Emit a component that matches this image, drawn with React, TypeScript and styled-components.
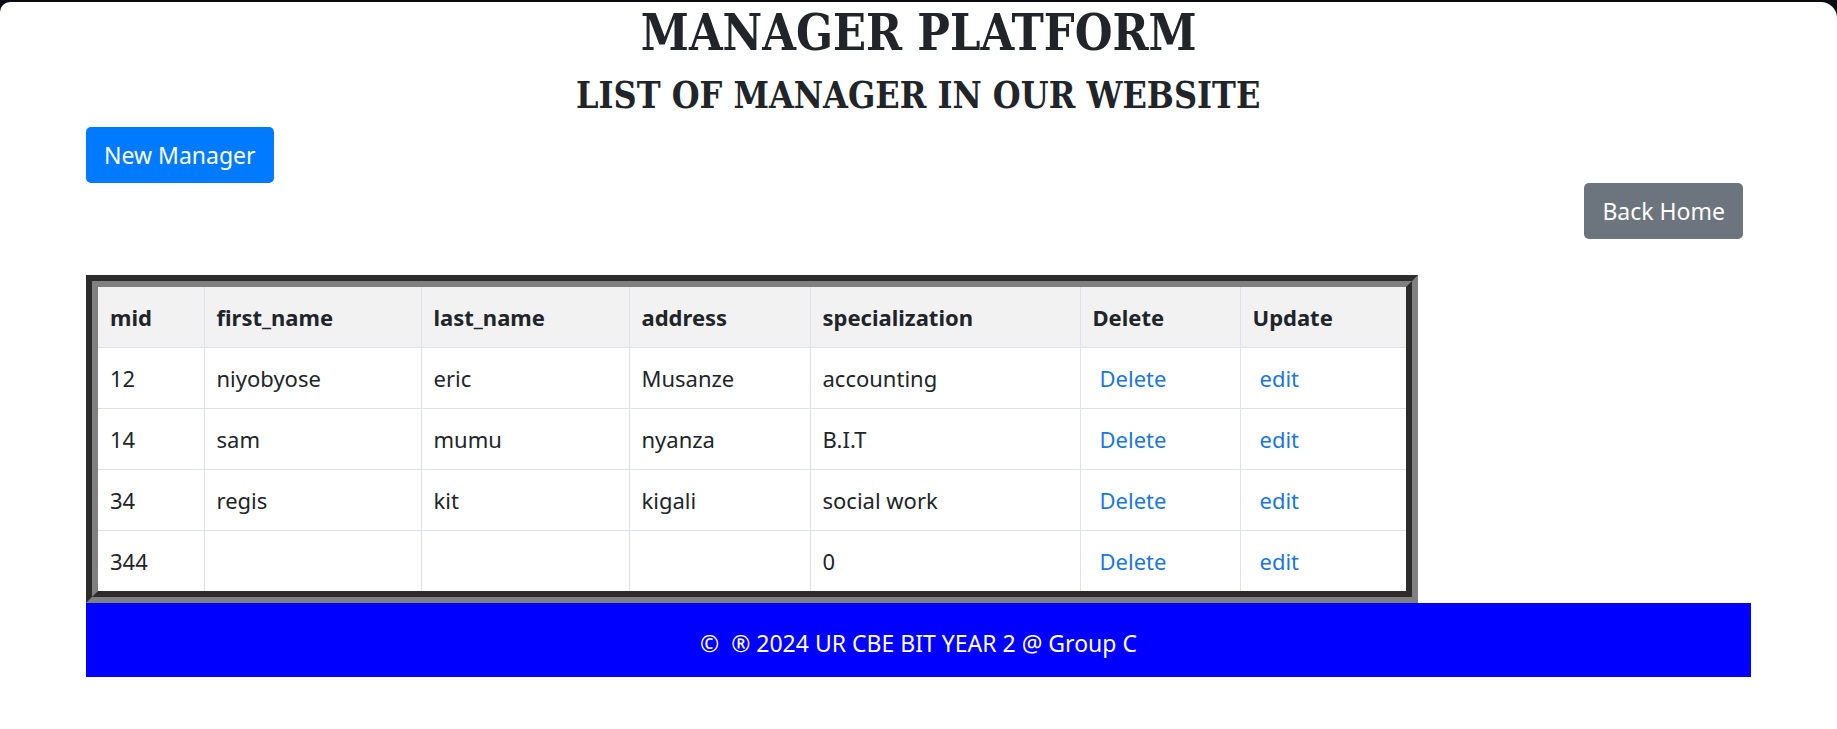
import React from "react";
import styled, { createGlobalStyle } from "styled-components";

type Manager = {
  mid: number;
  firstName: string;
  lastName: string;
  address: string;
  specialization: string;
};

const managers: Manager[] = [
  { mid: 12, firstName: "niyobyose", lastName: "eric", address: "Musanze", specialization: "accounting" },
  { mid: 14, firstName: "sam", lastName: "mumu", address: "nyanza", specialization: "B.I.T" },
  { mid: 34, firstName: "regis", lastName: "kit", address: "kigali", specialization: "social work" },
  { mid: 344, firstName: "", lastName: "", address: "", specialization: "0" },
];

const columns = [
  { label: "mid", width: 106 },
  { label: "first_name", width: 217 },
  { label: "last_name", width: 208 },
  { label: "address", width: 181 },
  { label: "specialization", width: 270 },
  { label: "Delete", width: 160 },
  { label: "Update", width: 166 },
];

const GlobalStyle = createGlobalStyle`
  html, body {
    margin: 0;
    padding: 0;
    background: #0b0b14;
  }

  body {
    font-family: "Noto Sans", "Open Sans", sans-serif;
    color: #212529;
  }
`;

const App: React.FC = () => {
  return (
    <>
      <GlobalStyle />
      <Page>
        <Title>
          <Narrow $scale={0.946}>MANAGER PLATFORM</Narrow>
        </Title>
        <Subtitle>
          <Narrow $scale={0.937}>LIST OF MANAGER IN OUR WEBSITE</Narrow>
        </Subtitle>
        <Container>
          <div>
            <Button $variant="primary">New Manager</Button>
          </div>
          <RightRow>
            <Button $variant="secondary">Back Home</Button>
          </RightRow>
          <TableFrame>
            <Table>
              <colgroup>
                {columns.map((c) => (
                  <Col key={c.label} $w={c.width} />
                ))}
              </colgroup>
              <thead>
                <tr>
                  {columns.map((c) => (
                    <Th key={c.label}>{c.label}</Th>
                  ))}
                </tr>
              </thead>
              <tbody>
                {managers.map((m) => (
                  <tr key={m.mid}>
                    <Td>{m.mid}</Td>
                    <Td>{m.firstName}</Td>
                    <Td>{m.lastName}</Td>
                    <Td>{m.address}</Td>
                    <Td>{m.specialization}</Td>
                    <Td>
                      <ActionLink href="#">Delete</ActionLink>
                    </Td>
                    <Td>
                      <ActionLink href="#">edit</ActionLink>
                    </Td>
                  </tr>
                ))}
              </tbody>
            </Table>
          </TableFrame>
          <Footer>©&nbsp; ® 2024 UR CBE BIT YEAR 2 @ Group C</Footer>
        </Container>
      </Page>
    </>
  );
};

const Page = styled.div`
  margin-top: 2px;
  min-height: calc(100vh - 2px);
  background: #ffffff;
  border-radius: 10px 16px 0 0;
`;

const Title = styled.h1`
  margin: 0 0 9px;
  text-align: center;
  font-family: "DejaVu Serif Condensed", "DejaVu Serif", serif;
  font-weight: 700;
  font-size: 51px;
  line-height: 1.2;
  color: #212529;
`;

const Subtitle = styled.h2`
  margin: 0;
  text-align: center;
  font-family: "DejaVu Serif Condensed", "DejaVu Serif", serif;
  font-weight: 700;
  font-size: 38px;
  line-height: 1.2;
  color: #212529;
`;

// the original heading face is narrower still; squeeze to its width
const Narrow = styled.span<{ $scale: number }>`
  display: inline-block;
  transform: scaleX(${(p) => p.$scale});
`;

const Container = styled.div`
  margin: 0 86px;
  padding-top: 9px;
`;

const Button = styled.button<{ $variant: "primary" | "secondary" }>`
  display: inline-flex;
  align-items: center;
  height: 56px;
  padding: 0 18px;
  border: none;
  border-radius: 5px;
  background: ${(p) => (p.$variant === "primary" ? "#007bff" : "#6c757d")};
  color: #ffffff;
  font-family: "Noto Sans", "Open Sans", sans-serif;
  font-size: 23px;
  cursor: pointer;
`;

const RightRow = styled.div`
  display: flex;
  justify-content: flex-end;
  margin-right: 8px;
`;

const TableFrame = styled.div`
  width: 80%;
  margin-top: 36px;
  border: 12px groove #808080;
  box-sizing: border-box;
`;

const Table = styled.table`
  width: 100%;
  table-layout: fixed;
  border-collapse: collapse;
`;

const Col = styled.col<{ $w: number }>`
  width: ${(p) => p.$w}px;
`;

const Th = styled.th`
  height: 60px;
  padding: 0 13px 0 12px;
  background: #f2f2f2;
  border: 1px solid #dee2e6;
  border-top: none;
  text-align: left;
  font-size: 22px;
  font-weight: 700;
  color: #212529;

  &:first-child {
    border-left: none;
  }

  &:last-child {
    border-right: none;
  }
`;

const Td = styled.td`
  height: 60px;
  padding: 0 13px 0 12px;
  border: 1px solid #dee2e6;
  font-size: 22px;
  color: #212529;

  tr:last-child > & {
    border-bottom: none;
  }

  &:first-child {
    border-left: none;
  }

  &:last-child {
    border-right: none;
  }
`;

const ActionLink = styled.a`
  margin-left: 7px;
  color: #1a76e0;
  text-decoration: none;
`;

const Footer = styled.footer`
  display: flex;
  align-items: center;
  justify-content: center;
  box-sizing: border-box;
  height: 74px;
  padding-top: 6px;
  background: #0000ff;
  color: #ffffff;
  font-size: 23px;
`;

export default App;
